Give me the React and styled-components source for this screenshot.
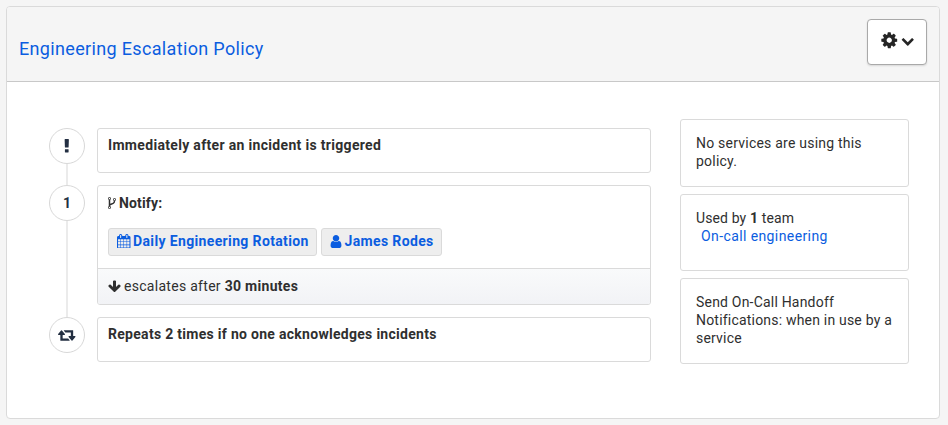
import React from "react";
import styled, { createGlobalStyle } from "styled-components";

const GlobalStyle = createGlobalStyle`
  * { box-sizing: border-box; }
  body {
    margin: 0;
    background: #f5f5f5;
    color: #2f2f2f;
    font: 14px/18px Roboto, "Liberation Sans", sans-serif;
  }
`;

const Page = styled.main`
  padding: 6px 8px 6px 6px;
  height: 425px;
`;

const Card = styled.section`
  height: 413px;
  border: 1px solid #dadada;
  border-radius: 4px;
  background: #fff;
`;

const Header = styled.header`
  display: flex;
  justify-content: space-between;
  height: 75px;
  padding: 12px 12px 0;
  border-bottom: 1px solid #c8c8c8;
  border-radius: 3px 3px 0 0;
  background: #f5f5f5;
`;

const Title = styled.a`
  margin-top: 18px;
  color: #0b5de0;
  font-size: 18px;
  line-height: 24px;
  letter-spacing: 0.34px;
`;

const MenuButton = styled.button`
  display: flex;
  align-items: flex-start;
  gap: 2px;
  width: 60px;
  height: 46px;
  padding: 11px 0 0 12px;
  border: 1px solid #a9a9a9;
  border-radius: 4px;
  background: #fff;
  color: #252525;
  box-shadow: 0 1px 2px rgba(0, 0, 0, 0.12);
`;

const Icon = styled.svg`
  display: block;
  flex: none;
  width: ${(p) => p.$width}px;
  height: ${(p) => p.$height || p.$width}px;
  margin-top: ${(p) => p.$top || 0}px;
  fill: currentColor;
`;

const Body = styled.div`
  display: flex;
  align-items: flex-start;
  gap: 29px;
  padding: 37px 30px 0 42px;
`;

const Steps = styled.div`
  width: 602px;
  margin-top: 9px;
`;

const Step = styled.div`
  display: flex;
  gap: 12px;
`;

const Rail = styled.div`
  display: flex;
  flex-direction: column;
  align-items: center;
  width: 36px;
  &::after {
    content: "";
    flex: 1;
    width: 2px;
    background: ${(p) => (p.$last ? "transparent" : "#ebebeb")};
  }
`;

const Marker = styled.div`
  display: flex;
  align-items: center;
  justify-content: center;
  width: 36px;
  height: 36px;
  padding-bottom: ${(p) => (p.$raised ? 1 : 0)}px;
  border: 1px solid #d8d8d8;
  border-radius: 50%;
  color: #232f42;
  font-weight: 700;
`;

const StepBox = styled.div`
  width: 554px;
  height: ${(p) => p.$height}px;
  margin-bottom: ${(p) => (p.$last ? 0 : 12)}px;
  border: 1px solid #dadada;
  border-radius: 3px;
  overflow: hidden;
`;

const StepTitle = styled.div`
  display: flex;
  gap: 3px;
  padding: ${(p) => p.$top || 7}px 10px 0;
  font-weight: 700;
  letter-spacing: ${(p) => p.$spacing || 0}px;
`;

const Targets = styled.div`
  display: flex;
  gap: 4px;
  height: 56px;
  padding: 16px 10px 0;
`;

const Target = styled.a`
  display: flex;
  gap: ${(p) => p.$gap}px;
  width: ${(p) => p.$width}px;
  height: 28px;
  padding: 3px 0 0 8px;
  border: 1px solid #dadada;
  border-radius: 3px;
  background: #eee;
  color: #0b5de0;
  font-weight: 700;
  white-space: nowrap;
  letter-spacing: ${(p) => p.$spacing}px;
`;

const Escalation = styled.div`
  display: flex;
  gap: 3px;
  height: 36px;
  padding: 8px 10px 0;
  border-top: 1px solid #dadada;
  background: linear-gradient(#f9fafb, #f2f3f6);
  letter-spacing: 0.29px;
`;

const Sidebar = styled.aside`
  display: flex;
  flex-direction: column;
  gap: 7px;
  width: 229px;
`;

const InfoBox = styled.div`
  height: ${(p) => p.$height}px;
  padding: 14px 0 0 15px;
  border: 1px solid #dadada;
  border-radius: 3px;
  white-space: nowrap;
  letter-spacing: ${(p) => p.$spacing}px;
`;

const TeamLink = styled.a`
  display: block;
  padding-left: 5px;
  color: #0b5de0;
  letter-spacing: 0.4px;
`;

const COG = "M1152 896q0-106-75-181t-181-75-181 75-75 181 75 181 181 75 181-75 75-181zm512-109v222q0 12-8 23t-20 13l-185 28q-19 54-39 91 35 50 107 138 10 12 10 25t-9 23q-27 37-99 108t-94 71q-12 0-26-9l-138-108q-44 23-91 38-16 136-29 186-7 28-36 28h-222q-14 0-24.5-8.5t-11.5-21.5l-28-184q-49-16-90-37l-141 107q-10 9-25 9-14 0-25-11-126-114-165-168-7-10-7-23 0-12 8-23 15-21 51-66.5t54-70.5q-27-50-41-99l-183-27q-13-2-21-12.5t-8-23.5v-222q0-12 8-23t19-13l186-28q14-46 39-92-40-57-107-138-10-12-10-24 0-10 9-23 26-36 98.5-107.5t94.5-71.5q13 0 26 10l138 107q44-23 91-38 16-136 29-186 7-28 36-28h222q14 0 24.5 8.5t11.5 21.5l28 184q49 16 90 37l142-107q9-9 24-9 13 0 25 10 129 119 165 170 7 8 7 22 0 12-8 23-15 21-51 66.5t-54 70.5q26 50 41 98l183 28q13 2 21 12.5t8 23.5z";
const CHEVRON = "M1683 808l-742 741q-19 19-45 19t-45-19l-742-741q-19-19-19-45.5t19-45.5l166-165q19-19 45-19t45 19l531 531 531-531q19-19 45-19t45 19l166 165q19 19 19 45.5t-19 45.5z";
const RETWEET = "M1280 1504q0 13-9.5 22.5t-22.5 9.5h-960q-8 0-13.5-2t-9-7-5.5-8-3-11.5-1-11.5v-600h-192q-26 0-45-19t-19-45q0-24 15-41l320-384q19-22 49-22t49 22l320 384q15 17 15 41 0 26-19 45t-45 19h-192v384h576q16 0 25 11l160 192q7 10 7 21zm640-416q0 24-15 41l-320 384q-20 23-49 23t-49-23l-320-384q-15-17-15-41 0-26 19-45t45-19h192v-384h-576q-16 0-25-12l-160-192q-7-9-7-20 0-13 9.5-22.5t22.5-9.5h960q8 0 13.5 2t9 7 5.5 8 3 11.5 1 11.5v600h192q26 0 45 19t19 45z";
const ARROW = "M1675 832q0 53-37 90l-651 652q-39 37-91 37-53 0-90-37l-651-652q-38-36-38-90 0-53 38-91l74-75q39-37 91-37 53 0 90 37l294 294v-704q0-52 38-90t90-38h128q52 0 90 38t38 90v704l294-294q37-37 90-37 52 0 91 37l75 75q37 39 37 91z";
const USER = "M1536 1399q0 109-62.5 187t-150.5 78h-854q-88 0-150.5-78t-62.5-187q0-85 8.5-160.5t31.5-152 58.5-131 94-89 134.5-34.5q131 128 313 128t313-128q76 0 134.5 34.5t94 89 58.5 131 31.5 152 8.5 160.5zm-256-887q0 159-112.5 271.5t-271.5 112.5-271.5-112.5-112.5-271.5 112.5-271.5 271.5-112.5 271.5 112.5 112.5 271.5z";
const CALENDAR = "M192 1664h288v-288h-288v288zm352 0h320v-288h-320v288zm-352-352h288v-320h-288v320zm352 0h320v-320h-320v320zm-352-384h288v-288h-288v288zm736 736h320v-288h-320v288zm-384-736h320v-288h-320v288zm768 736h288v-288h-288v288zm-384-352h320v-320h-320v320zm-352-864v-288q0-13-9.5-22.5t-22.5-9.5h-64q-13 0-22.5 9.5t-9.5 22.5v288q0 13 9.5 22.5t22.5 9.5h64q13 0 22.5-9.5t9.5-22.5zm736 864h288v-320h-288v320zm-384-384h320v-288h-320v288zm384 0h288v-288h-288v288zm32-480v-288q0-13-9.5-22.5t-22.5-9.5h-64q-13 0-22.5 9.5t-9.5 22.5v288q0 13 9.5 22.5t22.5 9.5h64q13 0 22.5-9.5t9.5-22.5zm384-64v1280q0 52-38 90t-90 38h-1408q-52 0-90-38t-38-90v-1280q0-52 38-90t90-38h128v-96q0-66 47-113t113-47h64q66 0 113 47t47 113v96h384v-96q0-66 47-113t113-47h64q66 0 113 47t47 113v96h128q52 0 90 38t38 90z";
const FORK = "M672 1472q0-40-28-68t-68-28-68 28-28 68 28 68 68 28 68-28 28-68zm0-1152q0-40-28-68t-68-28-68 28-28 68 28 68 68 28 68-28 28-68zm640 128q0-40-28-68t-68-28-68 28-28 68 28 68 68 28 68-28 28-68zm96 0q0 52-26 96.5t-70 69.5q-2 287-226 414-67 38-203 81-128 40-169.5 71t-41.5 100v26q44 25 70 69.5t26 96.5q0 80-56 136t-136 56-136-56-56-136q0-52 26-96.5t70-69.5v-820q-44-25-70-69.5t-26-96.5q0-80 56-136t136-56 136 56 56 136q0 52-26 96.5t-70 69.5v497q54-26 154-57 55-17 87.5-29.5t70.5-31 59-39.5 40.5-51 28-69.5 8.5-91.5q-44-25-70-69.5t-26-96.5q0-80 56-136t136-56 136 56 56 136z";
const EXCLAMATION = "M1088 1248v224q0 26-19 45t-45 19h-256q-26 0-45-19t-19-45v-224q0-26 19-45t45-19h256q26 0 45 19t19 45zm30-1056l-28 768q-1 26-20.5 45t-45.5 19h-256q-26 0-45.5-19t-20.5-45l-28-768q-1-26 17.5-45t44.5-19h320q26 0 44.5 19t17.5 45z";

function Glyph({ path, box = "0 0 1792 1792", width, height, top }) {
  return (
    <Icon viewBox={box} $width={width} $height={height} $top={top} aria-hidden="true">
      <path d={path} />
    </Icon>
  );
}

export default function App() {
  return (
    <Page>
      <GlobalStyle />
      <Card>
        <Header>
          <Title>Engineering Escalation Policy</Title>
          <MenuButton aria-label="Policy options">
            <Glyph path={COG} width={18.5} />
            <Glyph path={CHEVRON} width={13.5} top={3} />
          </MenuButton>
        </Header>
        <Body>
          <Steps>
            <Step>
              <Rail>
                <Marker>
                  <Glyph path={EXCLAMATION} box="640 128 512 1408" width={5.5} height={13.5} />
                </Marker>
              </Rail>
              <StepBox $height={45}>
                <StepTitle $spacing={0.32}>Immediately after an incident is triggered</StepTitle>
              </StepBox>
            </Step>
            <Step>
              <Rail><Marker $raised>1</Marker></Rail>
              <StepBox $height={120}>
                <StepTitle $top={8} $spacing={0.15}>
                  <Glyph path={FORK} box="384 128 1024 1536" width={8} height={12} top={3} />
                  Notify:
                </StepTitle>
                <Targets>
                  <Target $width={209} $gap={2.5} $spacing={0.36}>
                    <Glyph path={CALENDAR} box="64 0 1664 1792" width={13.5} height={14.5} top={1.5} />
                    Daily Engineering Rotation
                  </Target>
                  <Target $width={121} $gap={2.5} $spacing={0.36}>
                    <Glyph path={USER} box="256 128 1280 1536" width={12} height={13} top={2.5} />
                    James Rodes
                  </Target>
                </Targets>
                <Escalation>
                  <Glyph path={ARROW} box="64 64 1664 1664" width={13} top={3} />
                  <span>escalates after <b>30 minutes</b></span>
                </Escalation>
              </StepBox>
            </Step>
            <Step>
              <Rail $last>
                <Marker><Glyph path={RETWEET} box="0 384 1920 1152" width={17.5} height={11} /></Marker>
              </Rail>
              <StepBox $height={45} $last>
                <StepTitle $spacing={0.29}>Repeats 2 times if no one acknowledges incidents</StepTitle>
              </StepBox>
            </Step>
          </Steps>
          <Sidebar>
            <InfoBox $height={68} $spacing={0.22}>No services are using this<br />policy.</InfoBox>
            <InfoBox $height={77} $spacing={0.12}>
              Used by <b>1</b> team
              <TeamLink>On-call engineering</TeamLink>
            </InfoBox>
            <InfoBox $height={86} $spacing={0.2}>
              Send On-Call Handoff<br />Notifications: when in use by a<br />service
            </InfoBox>
          </Sidebar>
        </Body>
      </Card>
    </Page>
  );
}
